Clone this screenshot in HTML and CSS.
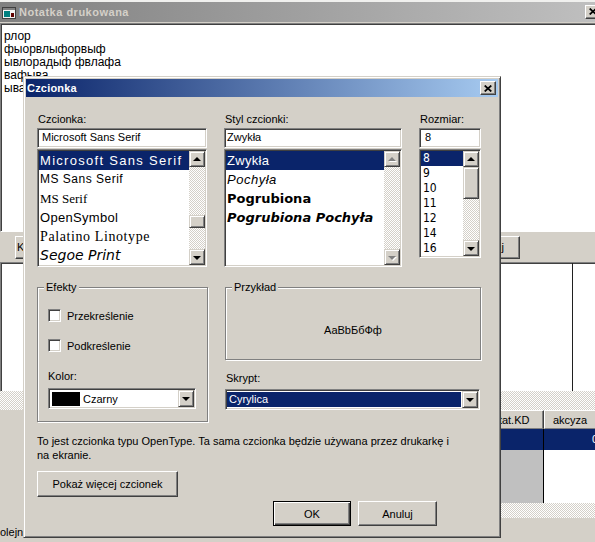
FILE: index.html
```html
<!DOCTYPE html>
<html lang="pl">
<head>
    <meta charset="UTF-8">
    <title>Czcionka</title>
    <link rel="stylesheet" href="styles.css">
</head>
<body>
<div class="screen">
    <!-- okno w tle -->
    <div class="bgwin">
        <div class="bg-title">
            <svg class="app-icon" width="14" height="12" viewBox="0 0 14 12">
                <rect x="0.5" y="0.5" width="13" height="11" fill="#f4f4f4" stroke="#404040"/>
                <rect x="1" y="1" width="12" height="2" fill="#808080"/>
                <rect x="2" y="4" width="6" height="6" fill="#008080"/>
                <rect x="9" y="6" width="3" height="4" fill="#600000"/>
            </svg>
            <span class="bg-title-text">Notatka drukowana</span>
            <span class="xbtn bg-close">
                <svg width="8" height="7" viewBox="0 0 8 7"><path d="M0.7 0.5L7.3 6.5M7.3 0.5L0.7 6.5" stroke="#000" stroke-width="1.7"/></svg>
            </span>
        </div>
        <div class="memo">
            <div>рлор</div>
            <div>фыорвлыфорвыф</div>
            <div>ывлорадыф фвлафа</div>
            <div>вафыва</div>
            <div>ывафыв</div>
        </div>
        <div class="toolbar">
            <button class="btn tb-left">Kolejny</button>
            <button class="btn tb-right">Drukuj</button>
        </div>
        <div class="grid-top"><div class="grid-top-col"></div></div>
        <div class="hatch hatch-top"></div>
        <div class="grid-bottom">
            <div class="grid-fill"></div>
            <div class="table">
                <div class="row thead">
                    <div class="th c1">Stat.KD</div>
                    <div class="th c2 th-left">akcyza</div>
                </div>
                <div class="row row-sel">
                    <div class="td c1"></div>
                    <div class="td c2 num">0</div>
                </div>
                <div class="row row-body">
                    <div class="td c1 td-fixed"></div>
                    <div class="td c2"></div>
                </div>
                <div class="hatch hatch-bottom"></div>
            </div>
        </div>
        <div class="status">olejny</div>
    </div>

    <!-- okno dialogowe -->
    <div class="dlg">
        <div class="dlg-title">
            <span>Czcionka</span>
            <span class="xbtn dlg-close">
                <svg width="8" height="7" viewBox="0 0 8 7"><path d="M0.7 0.5L7.3 6.5M7.3 0.5L0.7 6.5" stroke="#000" stroke-width="1.7"/></svg>
            </span>
        </div>
        <div class="dlg-body">
            <div class="pickers">
                <div class="picker">
                    <div class="lbl">Czcionka:</div>
                    <div class="field">Microsoft Sans Serif</div>
                    <div class="list list-font">
                        <ul class="items">
                            <li class="sel f-mss">Microsoft Sans Serif</li>
                            <li class="f-ms">MS Sans Serif</li>
                            <li class="f-msserif">MS Serif</li>
                            <li class="f-open">OpenSymbol</li>
                            <li class="f-pal">Palatino Linotype</li>
                            <li class="f-print">Segoe Print</li>
                        </ul>
                        <div class="vscroll">
                            <span class="arrow up"></span>
                            <span class="track"><span class="thumb thumb-font"></span></span>
                            <span class="arrow down"></span>
                        </div>
                    </div>
                </div>
                <div class="picker">
                    <div class="lbl">Styl czcionki:</div>
                    <div class="field field-style">Zwykła</div>
                    <div class="list list-style">
                        <ul class="items">
                            <li class="sel s-regular">Zwykła</li>
                            <li class="s-italic">Pochyła</li>
                            <li class="s-bold">Pogrubiona</li>
                            <li class="s-bolditalic">Pogrubiona Pochyła</li>
                        </ul>
                        <div class="vscroll disabled">
                            <span class="arrow up"></span>
                            <span class="track"></span>
                            <span class="arrow down"></span>
                        </div>
                    </div>
                </div>
                <div class="picker">
                    <div class="lbl">Rozmiar:</div>
                    <div class="field field-size">8</div>
                    <div class="list list-size">
                        <ul class="items">
                            <li class="sel">8</li>
                            <li>9</li>
                            <li>10</li>
                            <li>11</li>
                            <li>12</li>
                            <li>14</li>
                            <li>16</li>
                        </ul>
                        <div class="vscroll">
                            <span class="arrow up"></span>
                            <span class="track"><span class="thumb thumb-size"></span></span>
                            <span class="arrow down"></span>
                        </div>
                    </div>
                </div>
            </div>

            <div class="lower">
                <div class="group effects">
                    <span class="legend">Efekty</span>
                    <div class="check"><span class="check-box"></span>Przekreślenie</div>
                    <div class="check"><span class="check-box"></span>Podkreślenie</div>
                    <div class="lbl lbl-color">Kolor:</div>
                    <div class="combo combo-color">
                        <span class="swatch"></span>
                        <span class="combo-text">Czarny</span>
                        <span class="drop"></span>
                    </div>
                </div>
                <div class="right-col">
                    <div class="group sample">
                        <span class="legend">Przykład</span>
                        AaBbБбФф
                    </div>
                    <div class="lbl lbl-script">Skrypt:</div>
                    <div class="combo combo-script">
                        <span class="combo-sel">Cyrylica</span>
                        <span class="drop"></span>
                    </div>
                </div>
            </div>

            <p class="info">To jest czcionka typu OpenType. Ta sama czcionka będzie używana przez drukarkę i<br>na ekranie.</p>
            <button class="btn btn-more">Pokaż więcej czcionek</button>
            <div class="actions">
                <button class="btn btn-default">OK</button>
                <button class="btn btn-cancel">Anuluj</button>
            </div>
        </div>
    </div>
</div>
</body>
</html>
```

FILE: styles.css
```css
* {
    box-sizing: border-box;
}
html, body {
    margin: 0;
    padding: 0;
}
body {
    width: 595px;
    height: 542px;
    overflow: hidden;
    font: 11px "Liberation Sans", Arial, sans-serif;
    color: #000;
    background: #d4d0c8;
}
ul {
    margin: 0;
    padding: 0;
    list-style: none;
}
.screen {
    position: relative;
    width: 595px;
    height: 542px;
    overflow: hidden;
}

/* wspólne elementy klasyczne */
.btn {
    display: block;
    padding: 0;
    font: 11px "Liberation Sans", Arial, sans-serif;
    color: #000;
    background: #d4d0c8;
    border: 1px solid;
    border-color: #fff #404040 #404040 #fff;
    box-shadow: inset -1px -1px 0 #808080;
}
.xbtn {
    display: flex;
    align-items: center;
    justify-content: center;
    width: 16px;
    height: 14px;
    background: #d4d0c8;
    border: 1px solid;
    border-color: #fff #404040 #404040 #fff;
    box-shadow: inset -1px -1px 0 #808080;
}
.hatch {
    background: repeating-conic-gradient(#fff 0 25%, #d4d0c8 0 50%) 0 0 / 2px 2px;
}

/* okno w tle */
.bgwin {
    width: 605px;
    height: 542px;
    display: flex;
    flex-direction: column;
    border-top: 2px solid #f0f0ee;
}
.bg-title {
    display: flex;
    align-items: center;
    height: 20px;
    padding-left: 2px;
    background: linear-gradient(90deg, #808080, #c0c0c0);
    color: #d4d0c8;
    font-weight: bold;
    letter-spacing: 0.5px;
}
.app-icon {
    margin-top: 3px;
}
.bg-title-text {
    margin-left: 3px;
}
.bg-close {
    margin-left: auto;
    margin-right: 4px;
}
.memo {
    height: 210px;
    margin-top: 1px;
    padding: 6px 3px 0;
    background: #fff;
    border: 1px solid;
    border-color: #808080 #fff #fff #808080;
    box-shadow: inset 1px 1px 0 #404040;
    font-size: 12px;
    line-height: 13px;
}
.toolbar {
    display: flex;
    align-items: flex-start;
    height: 30px;
    padding-top: 4px;
}
.toolbar .btn {
    height: 23px;
}
.tb-left {
    width: 120px;
    margin-left: 15px;
    padding-left: 1px !important;
    text-align: left;
}
.tb-right {
    width: 70px;
    margin-left: auto;
    margin-right: 85px;
    padding-left: 6px !important;
}
.grid-top {
    height: 130px;
    background: #fff;
    border-top: 1px solid #808080;
    border-left: 1px solid #808080;
    box-shadow: inset 1px 1px 0 #404040;
}
.grid-top-col {
    width: 572px;
    height: 100%;
    border-right: 1px solid #202020;
}
.hatch-top {
    height: 19px;
}
.grid-bottom {
    display: flex;
    height: 108px;
}
.grid-fill {
    flex: 1;
}
.table {
    width: 128px;
    display: flex;
    flex-direction: column;
}
.row {
    display: flex;
}
.c1 {
    width: 67px;
}
.c2 {
    flex: 1;
}
.thead {
    height: 19px;
}
.th {
    display: flex;
    align-items: center;
    justify-content: center;
    border: 1px solid;
    border-color: #fff #404040 #808080 #fff;
    box-shadow: inset -1px 0 0 #808080;
}
.th-left {
    justify-content: flex-start;
    padding-left: 8px;
}
.row-sel {
    height: 21px;
    background: #0a246a;
    color: #fff;
}
.row-sel .c1, .row-body .c1 {
    border-right: 1px solid #000;
}
.num {
    text-align: right;
    padding-right: 7px;
    line-height: 21px;
}
.row-body {
    height: 53px;
    background: #fff;
}
.td-fixed {
    background: #c0c0c0;
}
.hatch-bottom {
    height: 15px;
}
.status {
    flex: 1;
    padding-top: 4px;
    line-height: 20px;
}

/* okno dialogowe Czcionka */
.dlg {
    position: absolute;
    left: 23px;
    top: 76px;
    width: 478px;
    height: 462px;
    padding: 2px;
    background: #d4d0c8;
    border: 1px solid;
    border-color: #d4d0c8 #404040 #404040 #d4d0c8;
    box-shadow: inset 1px 1px 0 #fff, inset -1px -1px 0 #808080;
}
.dlg-title {
    display: flex;
    align-items: center;
    height: 18px;
    padding-left: 1px;
    background: linear-gradient(90deg, #0a246a, #a6caf0);
    color: #fff;
    font-weight: bold;
    letter-spacing: 0.2px;
}
.dlg-close {
    margin-left: auto;
    margin-right: 2px;
}
.dlg-body {
    padding: 15px 0 0 11px;
}
.pickers {
    display: grid;
    grid-template-columns: 170px 178px 62px;
    column-gap: 17px;
}
.lbl {
    line-height: 14px;
    margin-bottom: 2px;
    padding-left: 1px;
}
.field {
    height: 20px;
    padding-left: 4px;
    line-height: 16px;
    background: #fff;
    border: 1px solid;
    border-color: #808080 #fff #fff #808080;
    box-shadow: inset 1px 1px 0 #404040, inset -1px -1px 0 #d4d0c8;
}
.field-style {
    padding-left: 2px;
}
.field-size {
    padding-left: 5px;
}
.list {
    display: flex;
    margin-top: 1px;
    padding: 1px;
    background: #fff;
    border: 1px solid;
    border-color: #808080 #fff #fff #808080;
    box-shadow: inset 1px 1px 0 #404040, inset -1px -1px 0 #d4d0c8;
}
.list-font, .list-style {
    height: 118px;
}
.list-size {
    height: 109px;
}
.items {
    flex: 1;
    min-width: 0;
}
.items li {
    height: 19px;
    line-height: 19px;
    padding-left: 1px;
    white-space: nowrap;
    overflow: hidden;
}
.items li.sel {
    background: #0a246a;
    color: #fff;
}
.list-size .items li {
    height: 15px;
    line-height: 15px;
    padding-left: 2px;
    font: 12px "Liberation Sans Narrow", "DejaVu Sans Condensed", sans-serif;
}

/* czcionki na liście */
.f-mss {
    font: 13px "Liberation Sans", sans-serif;
    letter-spacing: 1.3px;
}
.f-ms {
    font: 12px "Liberation Sans", sans-serif;
    letter-spacing: 0.5px;
}
.f-msserif {
    font: 13px "Liberation Serif", serif;
}
.f-open {
    font: 13px "Liberation Sans", sans-serif;
    letter-spacing: 0.3px;
}
.f-pal {
    font: 14px "Liberation Serif", serif;
    letter-spacing: 0.6px;
}
.f-print {
    font: italic 14px "DejaVu Sans", sans-serif;
}
.s-regular {
    font: 13px "Liberation Sans", sans-serif;
    letter-spacing: 0.3px;
}
.s-italic {
    font: italic 13px "Liberation Sans", sans-serif;
    letter-spacing: 0.5px;
}
.s-bold {
    font: bold 13px "DejaVu Sans", sans-serif;
}
.s-bolditalic {
    font: italic bold 13px "DejaVu Sans", sans-serif;
}

/* pasek przewijania */
.vscroll {
    display: flex;
    flex-direction: column;
    width: 16px;
}
.arrow, .drop {
    display: flex;
    align-items: center;
    justify-content: center;
    flex: none;
    width: 16px;
    height: 16px;
    background: #d4d0c8;
    border: 1px solid;
    border-color: #d4d0c8 #404040 #404040 #d4d0c8;
    box-shadow: inset 1px 1px 0 #fff, inset -1px -1px 0 #808080;
}
.arrow::after, .drop::after {
    content: "";
    width: 0;
    height: 0;
    border-left: 4px solid transparent;
    border-right: 4px solid transparent;
}
.arrow.up::after {
    border-bottom: 4px solid #000;
    margin-top: -1px;
}
.arrow.down::after, .drop::after {
    border-top: 4px solid #000;
    margin-top: 1px;
}
.disabled .arrow.up::after {
    border-bottom-color: #808080;
    filter: drop-shadow(1px 1px 0 #fff);
}
.disabled .arrow.down::after {
    border-top-color: #808080;
    filter: drop-shadow(1px 1px 0 #fff);
}
.track {
    flex: 1;
    background: repeating-conic-gradient(#fff 0 25%, #d4d0c8 0 50%) 0 0 / 2px 2px;
}
.thumb {
    display: block;
    width: 16px;
    background: #d4d0c8;
    border: 1px solid;
    border-color: #d4d0c8 #404040 #404040 #d4d0c8;
    box-shadow: inset 1px 1px 0 #fff, inset -1px -1px 0 #808080;
}
.thumb-font {
    height: 13px;
    margin-top: 48px;
}
.thumb-size {
    height: 32px;
}

/* dolna część */
.lower {
    display: grid;
    grid-template-columns: 171px 256px;
    column-gap: 17px;
    margin-top: 20px;
}
.group {
    position: relative;
    border: 1px solid #808080;
    box-shadow: inset 1px 1px 0 #fff, 1px 1px 0 #fff;
}
.legend {
    position: absolute;
    top: -7px;
    left: 6px;
    padding: 0 2px;
    line-height: 13px;
    background: #d4d0c8;
}
.effects {
    height: 135px;
    padding: 21px 0 0 10px;
}
.check {
    display: flex;
    align-items: center;
    height: 13px;
    margin-bottom: 17px;
}
.check-box {
    width: 13px;
    height: 13px;
    margin-right: 6px;
    background: #fff;
    border: 1px solid;
    border-color: #808080 #fff #fff #808080;
    box-shadow: inset 1px 1px 0 #404040, inset -1px -1px 0 #d4d0c8;
}
.lbl-color {
    margin-top: 1px;
    margin-bottom: 5px;
    padding-left: 0;
}
.combo {
    display: flex;
    align-items: center;
    height: 21px;
    background: #fff;
    border: 1px solid;
    border-color: #808080 #fff #fff #808080;
    box-shadow: inset 1px 1px 0 #404040, inset -1px -1px 0 #d4d0c8;
    padding: 1px;
}
.combo-color {
    width: 148px;
}
.swatch {
    width: 28px;
    height: 14px;
    margin-left: 2px;
    background: #000;
}
.combo-text {
    margin-left: 3px;
    flex: 1;
}
.drop {
    height: 17px;
    margin-left: auto;
}
.right-col {
    display: flex;
    flex-direction: column;
}
.sample {
    display: flex;
    align-items: center;
    justify-content: center;
    height: 73px;
    padding-top: 13px;
}
.lbl-script {
    margin-top: 11px;
    margin-bottom: 4px;
}
.combo-script {
    width: 255px;
}
.combo-sel {
    flex: 1;
    align-self: stretch;
    margin: 1px 1px 1px 0;
    padding-left: 2px;
    line-height: 15px;
    background: #0a246a;
    color: #fff;
}
.info {
    margin: 12px 0 0;
    line-height: 14px;
}
.btn-more {
    width: 141px;
    height: 26px;
    margin-top: 9px;
}
.actions {
    display: flex;
    margin-top: 4px;
}
.actions .btn {
    height: 25px;
}
.btn-default {
    width: 78px;
    margin-left: 236px;
    border-color: #000;
    box-shadow: inset 1px 1px 0 #fff, inset -1px -1px 0 #404040, inset -2px -2px 0 #808080;
}
.btn-cancel {
    width: 79px;
    margin-left: 7px;
}
```
